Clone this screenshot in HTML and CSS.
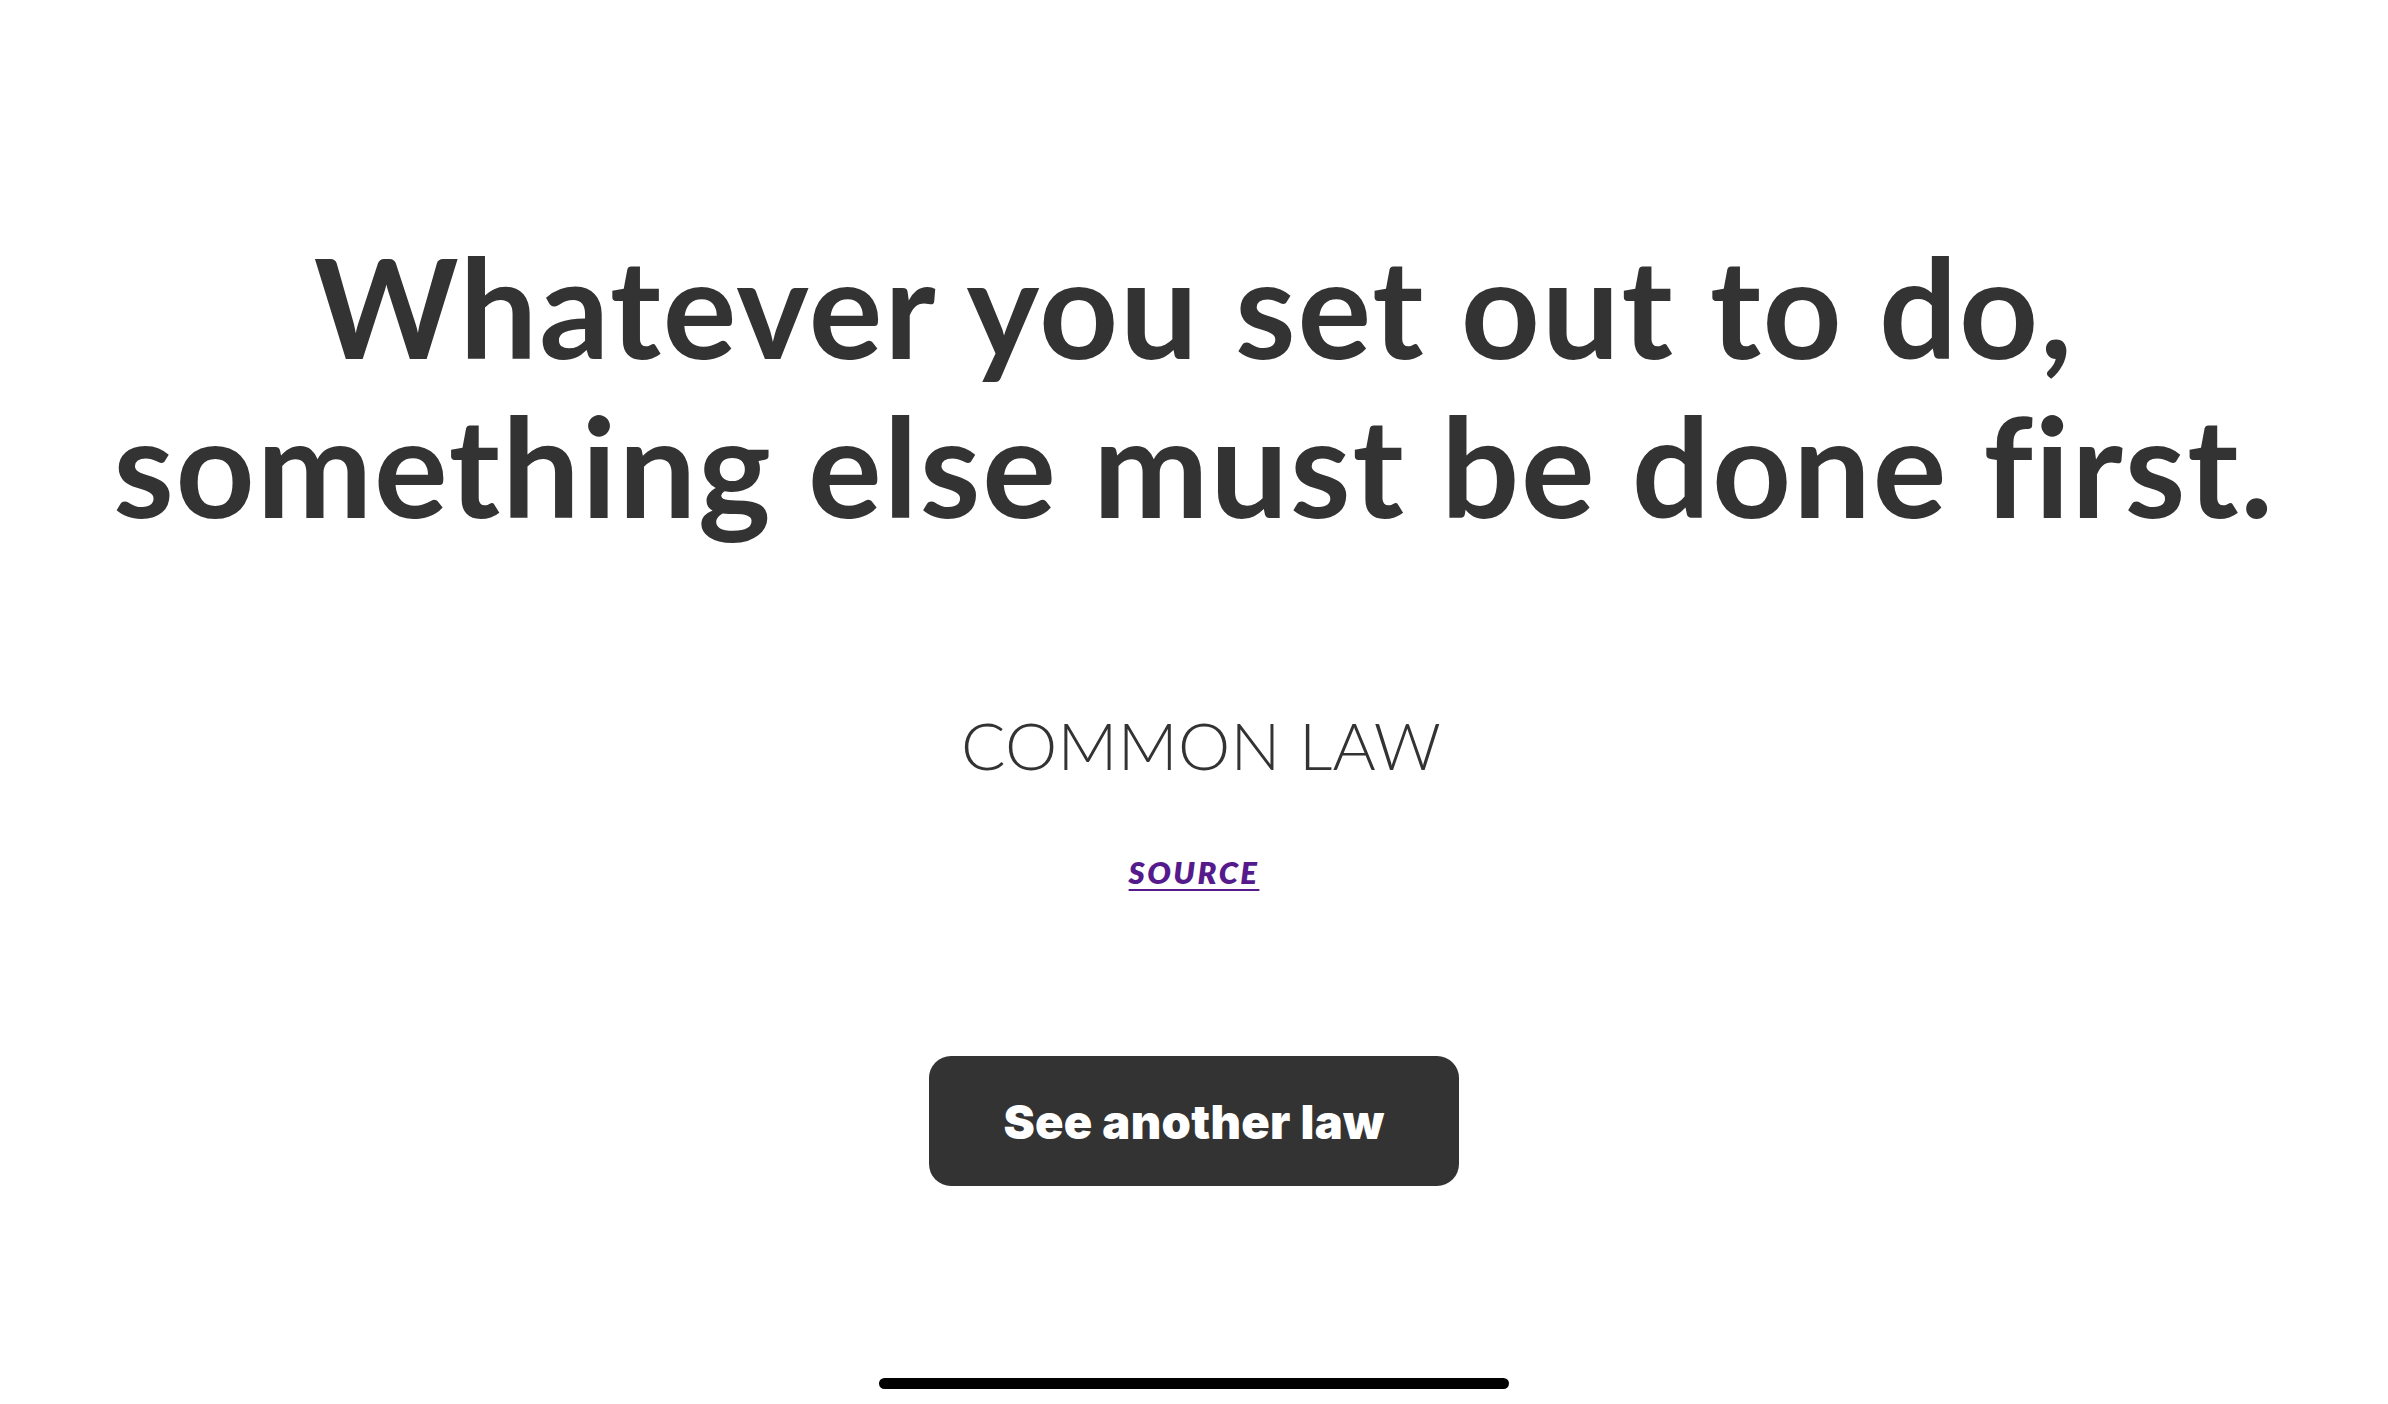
FILE: index.html
```html
<!DOCTYPE html>
<html lang="en">
<head>
<meta charset="utf-8">
<title>Laws</title>
<link rel="stylesheet" href="styles.css">
</head>
<body>
<main class="page">
  <h1 class="law-title">Whatever you set out to do,<br>something else must be done first.</h1>
  <p class="law-name">COMMON LAW</p>
  <a class="law-source" href="#">SOURCE</a>
  <button class="next-btn" type="button">See another law</button>
</main>
<div class="home-indicator"></div>
</body>
</html>
```

FILE: styles.css
```css
html, body {
  margin: 0;
  padding: 0;
  background: #ffffff;
}
body {
  width: 2388px;
  height: 1404px;
  overflow: hidden;
  position: relative;
  color: #333333;
  font-family: "Lato", "Liberation Sans", sans-serif;
}
.page {
  display: flex;
  flex-direction: column;
  align-items: center;
  padding-top: 226px;
}
.law-title {
  margin: 0;
  font-family: "Lato", sans-serif;
  font-weight: 700;
  font-size: 138px;
  line-height: 159px;
  text-align: center;
  color: #333333;
  letter-spacing: 1.8px;
}
.law-name {
  margin: 161px 0 0;
  padding-left: 14px;
  font-family: "Lato", sans-serif;
  font-weight: 300;
  font-size: 66px;
  line-height: 80px;
  letter-spacing: 0.3px;
  color: #333333;
}
.law-source {
  margin-top: 69px;
  font-family: "Lato", sans-serif;
  font-weight: 800;
  font-style: italic;
  font-size: 31px;
  line-height: 36px;
  letter-spacing: 2.5px;
  color: #551a8b;
  text-decoration: underline;
  text-decoration-thickness: 2px;
  text-underline-offset: 5px;
}
.next-btn {
  margin-top: 166px;
  width: 530px;
  height: 130px;
  border: none;
  border-radius: 22px;
  background: #333333;
  color: #ffffff;
  font-family: "Inter", sans-serif;
  font-weight: 900;
  font-size: 47px;
  letter-spacing: 0.3px;
  cursor: pointer;
}
.home-indicator {
  position: absolute;
  left: 879px;
  top: 1378px;
  width: 630px;
  height: 11px;
  border-radius: 6px;
  background: #000000;
}
```
